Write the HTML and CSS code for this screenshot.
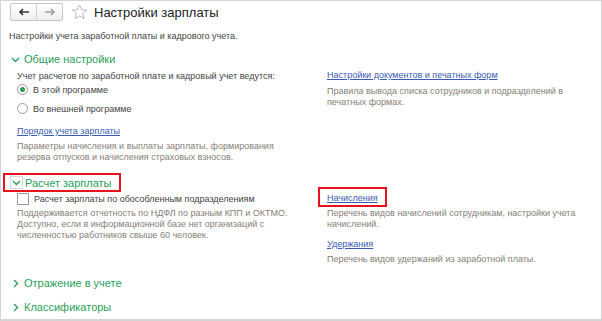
FILE: index.html
```html
<!DOCTYPE html>
<html lang="ru">
<head>
    <meta charset="UTF-8">
    <title>Настройки зарплаты</title>
    <link rel="stylesheet" href="styles.css">
</head>
<body>
    <div class="frame">
        <!-- Header -->
        <div class="head">
            <div class="nav">
                <span class="nav-btn">
                    <svg width="12" height="8" viewBox="0 0 12 8"><path d="M11 4H2M5 1L2 4l3 3" fill="none" stroke="#333" stroke-width="1.6"/></svg>
                </span>
                <span class="nav-btn">
                    <svg width="12" height="8" viewBox="0 0 12 8"><path d="M1 4h9M7 1l3 3-3 3" fill="none" stroke="#a0a0a0" stroke-width="1.6"/></svg>
                </span>
            </div>
            <svg class="star" width="17" height="16" viewBox="0 0 17 16"><path d="M8.5 1l2.1 4.6 5 .5-3.8 3.4 1.1 5L8.5 12l-4.4 2.5 1.1-5L1.4 6.1l5-.5z" fill="none" stroke="#b8b8b8" stroke-width="1"/></svg>
            <h1 class="title">Настройки зарплаты</h1>
        </div>
        <div class="subtitle">Настройки учета заработной платы и кадрового учета.</div>

        <!-- Общие настройки -->
        <div class="group-head">
            <svg class="chev" width="9" height="9" viewBox="0 0 9 9"><path d="M1 3l3.5 3.5L8 3" fill="none" stroke="#2a9f5a" stroke-width="1.4"/></svg>
            <span>Общие настройки</span>
        </div>
        <div class="cols">
            <div class="col">
                <div class="label">Учет расчетов по заработной плате и кадровый учет ведутся:</div>
                <div class="radio first"><span class="dot on"></span>В этой программе</div>
                <div class="radio"><span class="dot"></span>Во внешней программе</div>
                <a class="link gap" href="#">Порядок учета зарплаты</a>
                <div class="desc">Параметры начисления и выплаты зарплаты, формирования<br>резерва отпусков и начисления страховых взносов.</div>
            </div>
            <div class="col">
                <a class="link top" href="#">Настройки документов и печатных форм</a>
                <div class="desc wide">Правила вывода списка сотрудников и подразделений в<br>печатных формах.</div>
            </div>
        </div>

        <!-- Расчет зарплаты -->
        <div class="group-head marked">
            <span class="chev-box">
                <svg width="9" height="9" viewBox="0 0 9 9"><path d="M1 3l3.5 3.5L8 3" fill="none" stroke="#2a9f5a" stroke-width="1.4"/></svg>
            </span>
            <span>Расчет зарплаты</span>
        </div>
        <div class="cols">
            <div class="col">
                <div class="check"><span class="box"></span>Расчет зарплаты по обособленным подразделениям</div>
                <div class="desc">Поддерживается отчетность по НДФЛ по разным КПП и ОКТМО.<br>Доступно, если в информационной базе нет организаций с<br>численностью работников свыше 60 человек.</div>
            </div>
            <div class="col">
                <a class="link boxed" href="#">Начисления</a>
                <div class="desc">Перечень видов начислений сотрудникам, настройки учета<br>начислений.</div>
                <a class="link gap2" href="#">Удержания</a>
                <div class="desc">Перечень видов удержаний из заработной платы.</div>
            </div>
        </div>

        <!-- Collapsed groups -->
        <div class="group-head closed first-closed">
            <svg class="chev" width="9" height="9" viewBox="0 0 9 9"><path d="M3 1l3.5 3.5L3 8" fill="none" stroke="#2a9f5a" stroke-width="1.4"/></svg>
            <span>Отражение в учете</span>
        </div>
        <div class="group-head closed">
            <svg class="chev" width="9" height="9" viewBox="0 0 9 9"><path d="M3 1l3.5 3.5L3 8" fill="none" stroke="#2a9f5a" stroke-width="1.4"/></svg>
            <span>Классификаторы</span>
        </div>
    </div>
</body>
</html>
```

FILE: styles.css
```css
body {
    margin: 0;
    font-family: "Liberation Sans", Arial, sans-serif;
    background-color: white;
}

.frame {
    height: 321px;
    width: 602px;
    box-sizing: border-box;
    border: 1px solid #d4d4d4;
    border-bottom-width: 2px;
    overflow: hidden;
}

/* Header */
.head {
    display: flex;
    align-items: center;
    height: 23px;
    padding-left: 9px;
}

.nav {
    display: flex;
    height: 16px;
    border: 1px solid #c6c6c6;
    border-radius: 2px;
    background: linear-gradient(#ffffff, #eeeeee);
    margin-top: -1px;
}

.nav-btn {
    width: 25px;
    display: flex;
    align-items: center;
    justify-content: center;
}

.nav-btn + .nav-btn {
    border-left: 1px solid #d0d0d0;
}

.star {
    margin-left: 8px;
    margin-top: -2px;
}

.title {
    margin: 0 0 0 6px;
    font-size: 13px;
    font-weight: normal;
    color: #222;
    line-height: 16px;
}

.subtitle {
    margin-top: 6px;
    padding-left: 8px;
    font-size: 9px;
    line-height: 13px;
    color: #444;
}

/* Groups */
.group-head {
    display: flex;
    align-items: center;
    margin-top: 8px;
    padding-left: 10px;
    height: 16px;
    font-size: 11px;
    color: #2a9f5a;
}

.group-head .chev {
    margin-right: 4px;
}

.group-head.marked {
    margin-top: 10px;
    margin-left: 2px;
    width: 109px;
    height: 15px;
    padding-left: 5px;
    border: 2px solid #e8141c;
}

.chev-box {
    display: flex;
    align-items: center;
    justify-content: center;
    width: 11px;
    height: 11px;
    border: 1px solid #d8d8d8;
    margin-right: 2px;
}

.group-head.first-closed {
    margin-top: 10px;
}

.group-head.closed + .group-head.closed {
    margin-top: 8px;
}

.cols {
    display: grid;
    grid-template-columns: 310px 1fr;
    padding-left: 16px;
    font-size: 9px;
    color: #444;
}

.col {
    display: flex;
    flex-direction: column;
    align-items: flex-start;
}

.label {
    line-height: 12px;
    margin-top: 3px;
}

.radio {
    display: flex;
    align-items: center;
    height: 15px;
    margin-top: 4px;
}

.radio.first {
    margin-top: 0;
}

.dot {
    width: 9px;
    height: 9px;
    border: 1px solid #9a9a9a;
    border-radius: 50%;
    margin-right: 5px;
    position: relative;
    background: white;
}

.dot.on::after {
    content: "";
    position: absolute;
    left: 2px;
    top: 2px;
    width: 5px;
    height: 5px;
    border-radius: 50%;
    background: #2a9f5a;
}

.check {
    display: flex;
    align-items: center;
    height: 13px;
}

.box {
    width: 10px;
    height: 10px;
    border: 1px solid #9a9a9a;
    margin-right: 5px;
}

.link {
    color: #3a5ab4;
    text-decoration: underline;
    line-height: 13px;
}

.link.top {
    margin-top: 2px;
}

.link.gap {
    margin-top: 9px;
}

.link.gap2 {
    margin-top: 8px;
}

.link.boxed {
    margin: -5px 0 -2px -9px;
    padding: 3px 7px 0 7px;
    border: 2px solid #e8141c;
}

.desc {
    margin-top: 3px;
    line-height: 11px;
    color: #858078;
}

.desc.wide {
    margin-top: 4px;
}
```
